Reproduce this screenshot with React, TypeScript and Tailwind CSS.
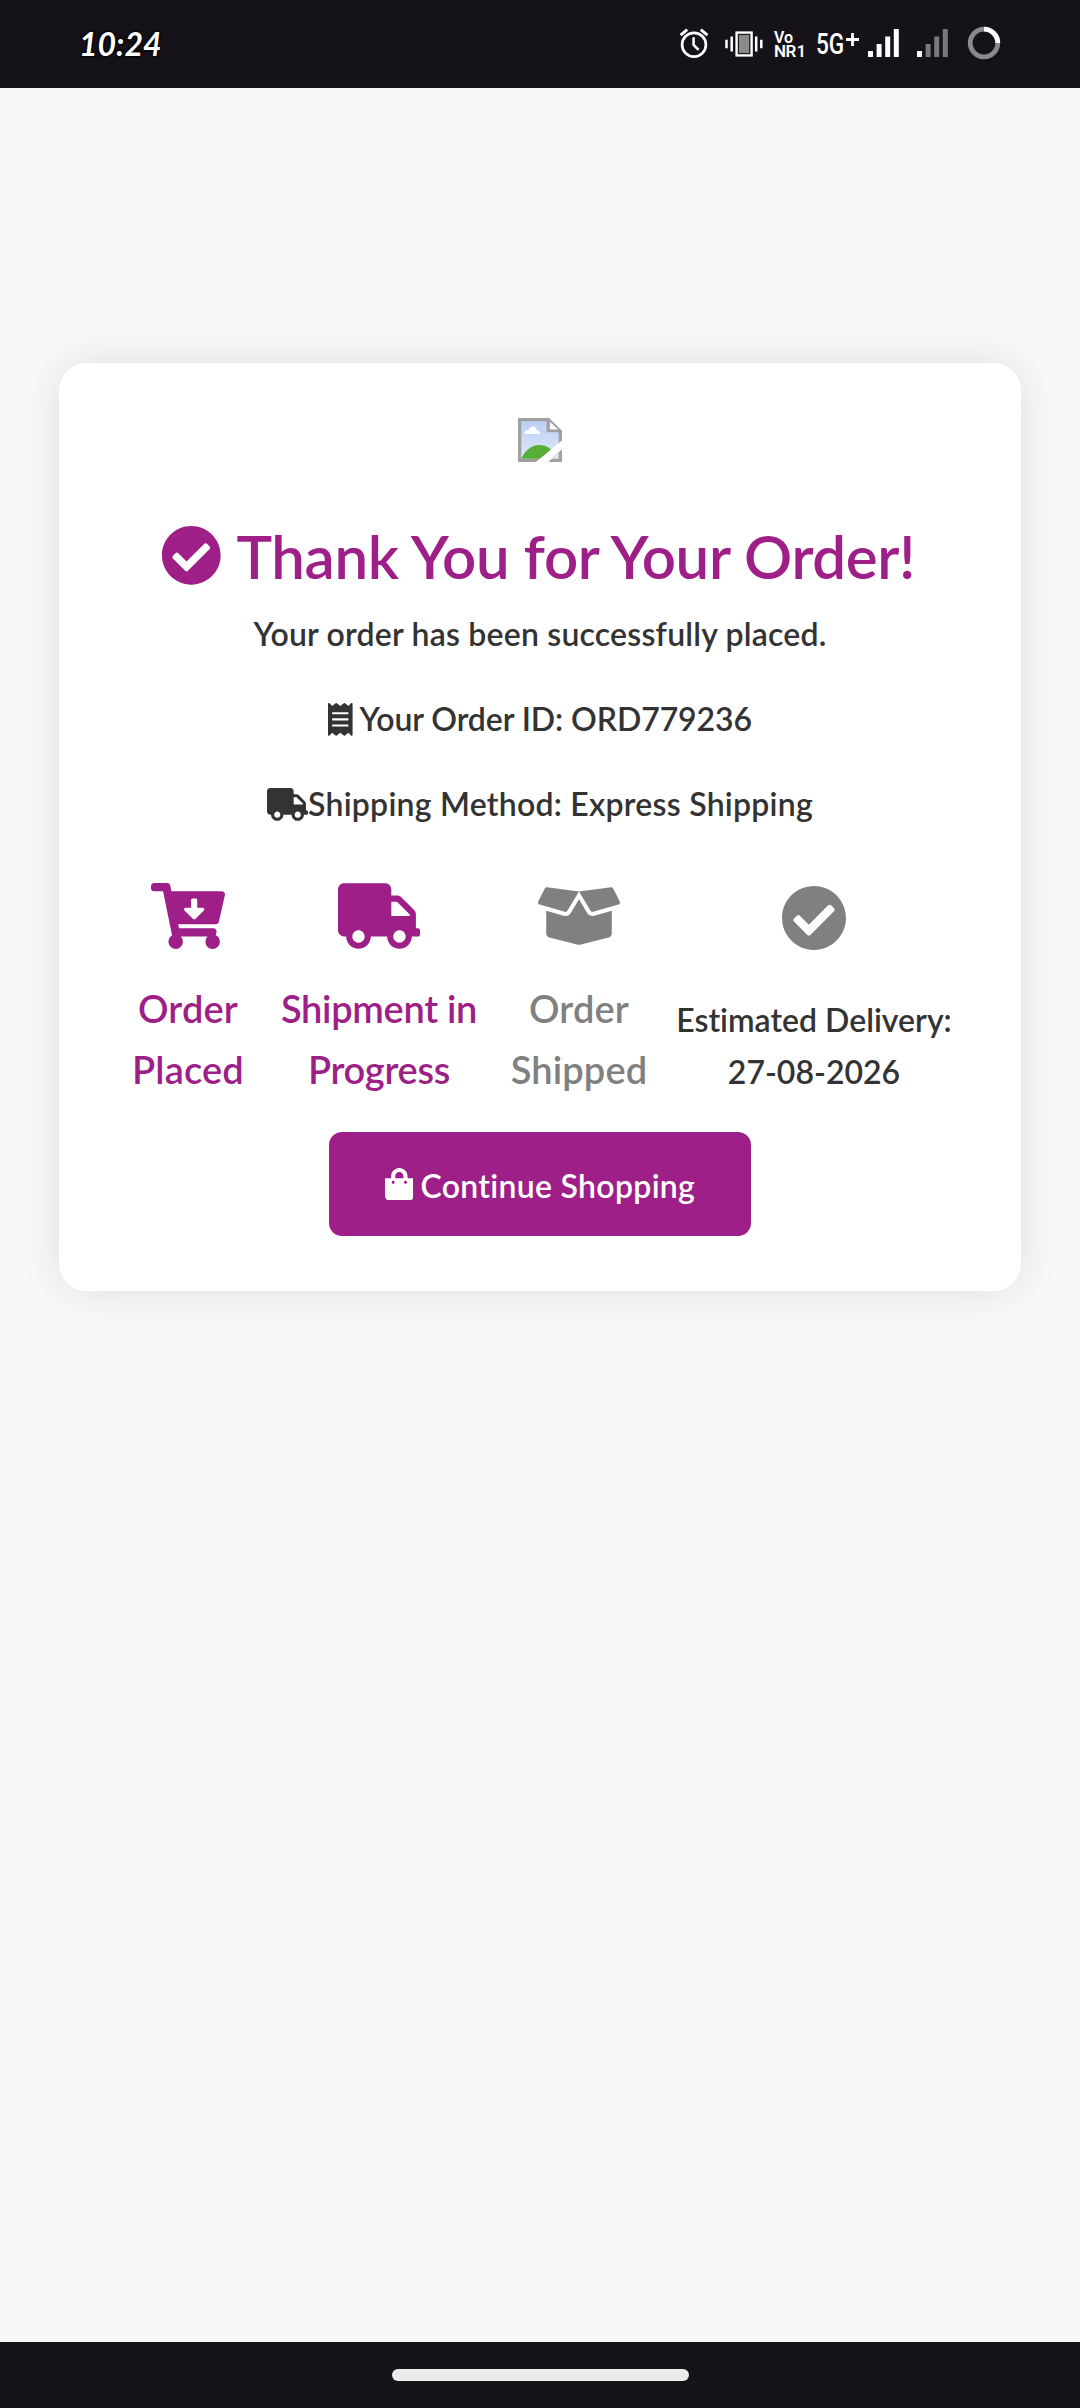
import type { ReactNode } from 'react';
import { FaBoxOpen, FaCartArrowDown, FaCheckCircle, FaReceipt, FaShoppingBag, FaTruck } from 'react-icons/fa';

function AlarmIcon() {
  return (
    <svg width="30" height="32" viewBox="0 0 30 32" fill="none" stroke="#fff">
      <circle cx="15" cy="17.7" r="11.9" strokeWidth="2.7" />
      <path d="M14.6 10.3v7.6l5 5" strokeWidth="2.5" />
      <path d="M1.6 8.2l6.6-5.5M28.4 8.2l-6.6-5.5" strokeWidth="3" />
    </svg>
  );
}

function VibrateIcon() {
  return (
    <svg width="38" height="26" viewBox="0 0 38 26">
      <rect x="11.6" y="1.6" width="15" height="22.8" fill="none" stroke="#fff" strokeWidth="2.4" />
      <rect x="14" y="4" width="10.2" height="18" fill="#8a898c" />
      <path d="M1.5 8.7v8.6M6.7 5.5v15M31.2 5.5v15M36.3 8.7v8.6" stroke="#fff" strokeWidth="2.5" />
    </svg>
  );
}

function SignalBars({ active }: { active: number }) {
  const bars = [6, 13, 20.5, 28];
  return (
    <svg width="32" height="28" viewBox="0 0 32 28">
      {bars.map((h, i) => (
        <rect key={i} x={i * 8.6} y={28 - h} width="5" height={h} fill={i < active ? '#fff' : '#79787c'} />
      ))}
    </svg>
  );
}

function ProgressRing() {
  return (
    <svg width="34" height="34" viewBox="0 0 34 34" fill="none" strokeWidth="4.8">
      <circle cx="17" cy="17" r="13.8" stroke="#8a898c" />
      <path d="M17 3.2A13.8 13.8 0 0 1 30.8 17" stroke="#fff" />
    </svg>
  );
}

function BrokenImage() {
  return (
    <svg width="44" height="44" viewBox="0 0 16 16">
      <defs>
        <linearGradient id="sky" x1="0" y1="0" x2="0" y2="1">
          <stop offset="0" stopColor="#bcd0f5" />
          <stop offset="1" stopColor="#dde7fa" />
        </linearGradient>
      </defs>
      <path d="M0 0h11.3L16 4.6V16H0z" fill="#a0a0a0" />
      <path d="M1.2 1.2h9.2v4h4.4v9.6H1.2z" fill="url(#sky)" />
      <path d="M11.6 1.4v2.8h3z" fill="#fff" />
      <path d="M2.3 5.8c0-1 .8-1.5 1.6-1.4.3-1 1-1.4 1.7-1.3.8.1 1.1.7 1.2 1.3.8.1 1.2.7 1.2 1.4z" fill="#fff" />
      <path d="M1.2 14.8c1.2-2.9 3.7-5 6.5-5 2.9 0 5 1.5 6.3 5z" fill="#56ae36" />
      <path d="M16 8.2V12l-4.3 4H6.5z" fill="#fff" />
      <path d="M16 11.4V16h-5z" fill="#a0a0a0" />
      <path d="M14.8 12.5v2.3h-2.4z" fill="#dde7fa" />
    </svg>
  );
}

function StatusBar() {
  return (
    <header className="flex h-[88px] items-start bg-[#15121a] text-white">
      <div className="mt-[24px] ml-[79px] w-[90px] whitespace-nowrap text-[32px] leading-[40px] font-bold italic [text-shadow:0_0_3px_#000,0_0_3px_#000,0_0_2px_#000]">
        10:24
      </div>
      <div className="mt-[27px] ml-[510px]">
        <AlarmIcon />
      </div>
      <div className="mt-[31px] ml-[16px]">
        <VibrateIcon />
      </div>
      <div className="mt-[31px] ml-[11px] w-[31px] font-['Roboto'] font-semibold">
        <div className="h-[13px] text-[16px] leading-[13px]">Vo</div>
        <div className="flex h-[14px] whitespace-nowrap text-[17px] leading-[14px] tracking-[-0.6px]">
          NR<span className="ml-[1px] pt-[1px] text-[16px]">1</span>
        </div>
      </div>
      <div className="mt-[28px] ml-[11px] flex w-[44px] whitespace-nowrap font-['Roboto'] leading-[32px]">
        <span className="w-[29px] origin-left scale-x-[0.78] text-[29px] font-medium">5G</span>
        <svg className="mt-[5px] ml-[1px]" width="13" height="13" viewBox="0 0 13 13">
          <path d="M6.5 0v13M0 6.5h13" stroke="#fff" strokeWidth="2.8" />
        </svg>
      </div>
      <div className="mt-[29px] ml-[8px]">
        <SignalBars active={4} />
      </div>
      <div className="mt-[29px] ml-[17px]">
        <SignalBars active={1} />
      </div>
      <div className="mt-[26px] ml-[18px]">
        <ProgressRing />
      </div>
    </header>
  );
}

function Step({ icon, width, color, children }: { icon: ReactNode; width: string; color: string; children: ReactNode }) {
  return (
    <div className={`flex shrink-0 flex-col items-center ${width} ${color}`}>
      {icon}
      {children}
    </div>
  );
}

export default function App() {
  return (
    <div className="flex h-[2408px] w-[1080px] flex-col overflow-hidden bg-[#f8f8f8] font-['Lato',sans-serif] font-semibold text-[#333] [font-variant-ligatures:none]">
      <StatusBar />

      <main className="flex-1 px-[59px] pt-[275px]">
        <section className="flex h-[928px] flex-col items-center rounded-[27px] bg-white pt-[55px] shadow-[0_0_41px_rgba(0,0,0,0.1)]">
          <BrokenImage />

          <h1 className="mt-[58px] flex h-[72px] items-center gap-[15px] pr-[4px] whitespace-nowrap text-[60px] leading-[72px] tracking-[-0.35px] text-[#9d1f87]">
            <FaCheckCircle className="mt-[-2px] size-[60.6px]" />
            <span>Thank You for Your Order!</span>
          </h1>

          <p className="mt-[17px] text-[32px] leading-[50px] tracking-[0.2px]">Your order has been successfully placed.</p>

          <p className="mt-[35px] flex text-[32px] leading-[50px] tracking-[-0.08px] whitespace-nowrap">
            <FaReceipt className="mt-[9px] mr-[7px] h-[32.8px] w-[24.6px]" />
            Your Order ID: ORD779236
          </p>

          <p className="mt-[35px] flex text-[32px] leading-[50px] tracking-[0.24px] whitespace-nowrap">
            <FaTruck className="mt-[9px] h-[32.8px] w-[41px]" />
            Shipping Method: Express Shipping
          </p>

          <div className="mt-[54px] flex h-[219px] w-full pl-[60px] text-center whitespace-nowrap">
            <Step width="w-[138px]" color="text-[#9d1f87]" icon={<FaCartArrowDown className="h-[66px] w-[74px]" />}>
              <div className="mt-[29px] text-[38px] leading-[61px] tracking-[0.15px]">Order<br />Placed</div>
            </Step>
            <Step width="w-[244px]" color="text-[#9d1f87]" icon={<FaTruck className="h-[66px] w-[82px]" />}>
              <div className="mt-[29px] text-[38px] leading-[61px] tracking-[-0.3px]">Shipment in<br />Progress</div>
            </Step>
            <Step width="w-[156px]" color="text-[#808080]" icon={<FaBoxOpen className="h-[66px] w-[82px]" />}>
              <div className="mt-[29px] text-[38px] leading-[61px] tracking-[0.15px]">Order<br />Shipped</div>
            </Step>
            <Step width="w-[314px]" color="text-[#333]" icon={<FaCheckCircle className="mt-[2px] size-[66px] text-[#808080]" />}>
              <div className="mt-[43px] text-[32px] leading-[52px]">Estimated Delivery:<br />27-08-2026</div>
            </Step>
          </div>

          <button className="mt-[30px] flex h-[104px] w-[422px] items-center justify-center gap-[7px] rounded-[13px] bg-[#9d1f87] text-[32px] tracking-[0.3px] whitespace-nowrap text-white">
            <FaShoppingBag className="h-[32.8px] w-[28.7px]" />
            <span className="mt-[3px]">Continue Shopping</span>
          </button>
        </section>
      </main>

      <footer className="flex h-[66px] justify-center bg-[#15121a] pt-[27px]">
        <div className="h-[12px] w-[297px] rounded-full bg-[#ebebeb]" />
      </footer>
    </div>
  );
}
